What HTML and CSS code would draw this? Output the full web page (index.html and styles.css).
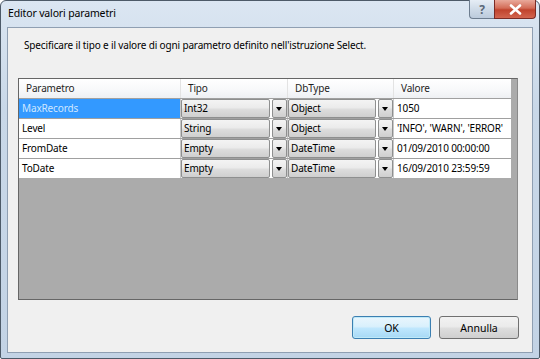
FILE: index.html
```html
<!DOCTYPE html>
<html>
  <head>
    <meta name="viewport" content="width=device-width, initial-scale=1" />
    <link rel="stylesheet" href="styles.css">
  </head>
  <body>
    <div class="window">
      <div class="titlebar">
        <span class="title">Editor valori parametri</span>
        <div class="caption-btns">
          <div class="cap help">?</div>
          <div class="cap close">
            <svg width="13" height="11" viewBox="0 0 13 11">
              <path d="M2 1.5 L11 9.5 M11 1.5 L2 9.5" stroke="#fff" stroke-width="2.6" stroke-linecap="round"/>
            </svg>
          </div>
        </div>
      </div>
      <div class="client">
        <p class="desc">Specificare il tipo e il valore di ogni parametro definito nell'istruzione Select.</p>
        <div class="grid">
          <div class="rows">
            <div class="row head">
              <div class="cell">Parametro</div>
              <div class="cell">Tipo</div>
              <div class="cell">DbType</div>
              <div class="cell">Valore</div>
            </div>
            <div class="row">
              <div class="cell name selected">MaxRecords</div>
              <div class="cell combo"><span class="box">Int32</span><span class="arrow"></span></div>
              <div class="cell combo"><span class="box">Object</span><span class="arrow"></span></div>
              <div class="cell">1050</div>
            </div>
            <div class="row">
              <div class="cell name">Level</div>
              <div class="cell combo"><span class="box">String</span><span class="arrow"></span></div>
              <div class="cell combo"><span class="box">Object</span><span class="arrow"></span></div>
              <div class="cell">'INFO', 'WARN', 'ERROR'</div>
            </div>
            <div class="row">
              <div class="cell name">FromDate</div>
              <div class="cell combo"><span class="box">Empty</span><span class="arrow"></span></div>
              <div class="cell combo"><span class="box">DateTime</span><span class="arrow"></span></div>
              <div class="cell">01/09/2010 00:00:00</div>
            </div>
            <div class="row">
              <div class="cell name">ToDate</div>
              <div class="cell combo"><span class="box">Empty</span><span class="arrow"></span></div>
              <div class="cell combo"><span class="box">DateTime</span><span class="arrow"></span></div>
              <div class="cell">16/09/2010 23:59:59</div>
            </div>
          </div>
        </div>
        <div class="actions">
          <button class="btn default">OK</button>
          <button class="btn">Annulla</button>
        </div>
      </div>
    </div>
  </body>
</html>
```

FILE: styles.css
```css
* {
  box-sizing: border-box;
}
body {
  margin: 0;
  font-family: "Noto Sans", "DejaVu Sans", sans-serif;
  font-size: 10px;
  letter-spacing: -0.15px;
  color: #000;
  background: #fff;
}

.window {
  width: 540px;
  height: 359px;
  border: 1px solid #4d5a68;
  border-radius: 6px 6px 2px 2px;
  background: linear-gradient(180deg, #dbe6f2 0%, #c9d8e8 30%, #c3d3e5 100%);
  padding: 0 6px 5px 6px;
  display: flex;
  flex-direction: column;
}

.titlebar {
  height: 26px;
  display: flex;
  align-items: flex-start;
  justify-content: space-between;
}
.title {
  margin-top: 5px;
  margin-left: 1px;
  font-size: 10.5px;
}
.caption-btns {
  display: flex;
  margin-right: -3px;
  margin-top: -1px;
}
.cap {
  height: 19px;
  display: flex;
  align-items: center;
  justify-content: center;
  border: 1px solid #6d7d8f;
  border-top: none;
}
.help {
  width: 25px;
  border-radius: 0 0 0 4px;
  border-right: none;
  background: linear-gradient(180deg, #e6edf5 0%, #cfdbe8 50%, #bccbdc 100%);
  color: #5a6878;
  font-weight: bold;
  font-size: 12px;
}
.close {
  width: 42px;
  border-radius: 0 0 4px 0;
  border-color: #7a2b25;
  background: linear-gradient(180deg, #e9a99b 0%, #d36c57 45%, #c0432d 55%, #d2654f 100%);
}

.client {
  flex: 1;
  border: 1px solid #8f9fb2;
  background: #f0f0f0;
  display: flex;
  flex-direction: column;
}
.desc {
  margin: 9px 0 0 16px;
  height: 17px;
  line-height: 17px;
}

.grid {
  margin: 24px 0 0 10px;
  width: 500px;
  height: 222px;
  border: 1px solid #666;
  border-right-color: #8a8a8a;
  background: #ababab;
}
.rows {
  width: 492px;
  background: #a0a0a0;
  display: flex;
  flex-direction: column;
  gap: 1px;
}
.row {
  display: grid;
  grid-template-columns: 161px 106px 105px 117px;
  gap: 1px;
  height: 19px;
  background: #c8c8c8;
  padding-right: 1px;
}
.row.head {
  background: #e3e3e3;
}
.cell {
  background: #fff;
  padding-left: 3px;
  line-height: 19px;
  white-space: nowrap;
  overflow: hidden;
}
.head .cell {
  background: linear-gradient(180deg, #ffffff 0%, #f7f8fa 60%, #eef0f3 100%);
  padding-left: 7px;
  color: #1e1e1e;
}
.cell.selected {
  background: #3399ff;
  color: #cfe7ff;
}
.cell.combo {
  display: flex;
  gap: 2px;
  padding: 0;
  background: #fff;
}
.box {
  flex: 1;
  border: 1px solid #8e8f8f;
  border-radius: 2px;
  background: linear-gradient(180deg, #f4f4f4 0%, #ebebeb 45%, #dddddd 55%, #cfcfcf 100%);
  line-height: 17px;
  padding-left: 2px;
}
.arrow {
  width: 15px;
  border: 1px solid #8e8f8f;
  border-radius: 2px;
  background: linear-gradient(180deg, #f4f4f4 0%, #ebebeb 45%, #dddddd 55%, #cfcfcf 100%);
  position: relative;
}
.arrow::after {
  content: "";
  position: absolute;
  left: 3px;
  top: 7px;
  border-left: 3.5px solid transparent;
  border-right: 3.5px solid transparent;
  border-top: 4px solid #000;
}

.actions {
  display: flex;
  justify-content: flex-end;
  gap: 8px;
  margin: 16px 13px 0 0;
}
.btn {
  font-family: inherit;
  font-size: 10.5px;
  width: 80px;
  height: 23px;
  border: 1px solid #707070;
  border-radius: 3px;
  background: linear-gradient(180deg, #f2f2f2 0%, #ebebeb 45%, #dddddd 55%, #cfcfcf 100%);
  color: #000;
  padding: 0;
}
.btn.default {
  width: 79px;
  border-color: #3c7fb1;
  box-shadow: inset 0 0 0 1px #bfe9f8;
  background: linear-gradient(180deg, #eaf6fd 0%, #d9f0fc 45%, #bee6fd 55%, #a7d9f5 100%);
}
```
